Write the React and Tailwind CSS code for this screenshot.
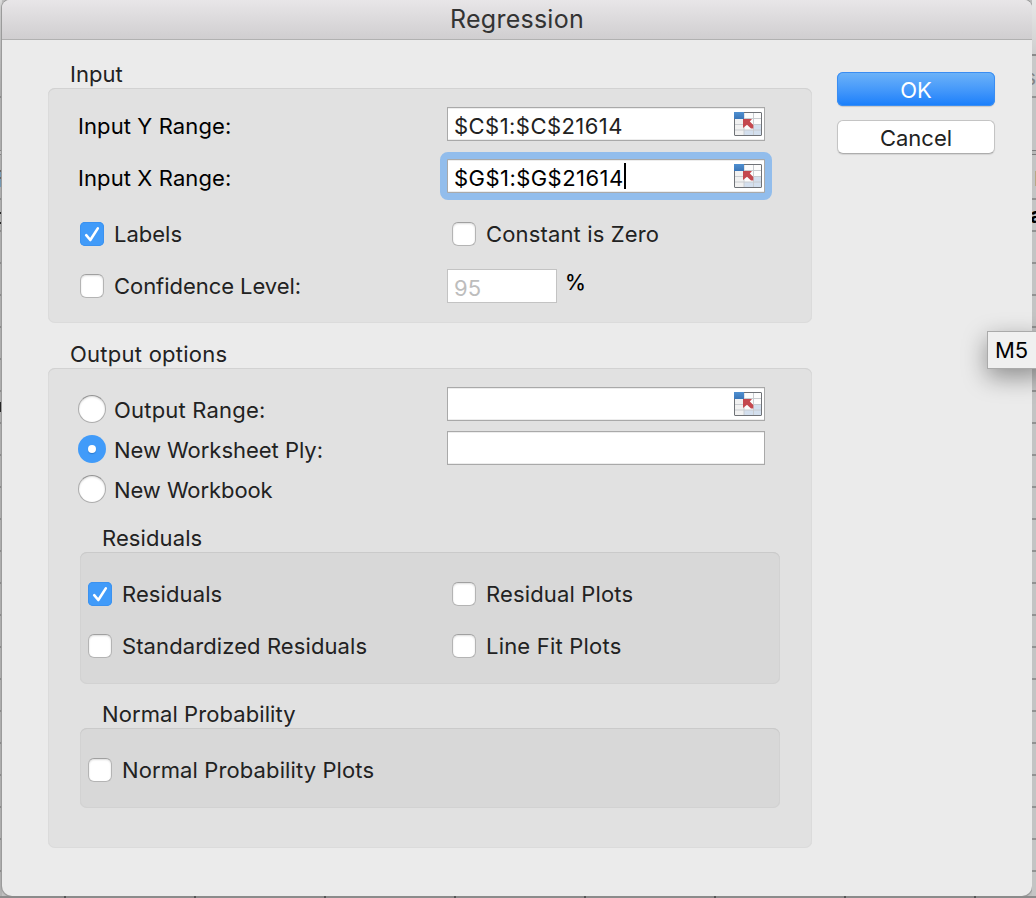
import React from "react";

function RangeIcon() {
  return (
    <svg width="28" height="26" viewBox="0 0 28 26" className="shrink-0">
      <defs>
        <linearGradient id="cell" x1="0" y1="0" x2="0" y2="1">
          <stop offset="0" stopColor="#4f8fd0" />
          <stop offset="1" stopColor="#3b76b8" />
        </linearGradient>
      </defs>
      <rect y="1" width="28" height="24" fill="#fcfcfc" />
      <rect x="1" y="8" width="9" height="16" fill="#f1f1f1" />
      <rect x="19" y="13" width="8" height="11" fill="#d3dfee" />
      <rect x="10" y="19" width="17" height="5" fill="#d3dfee" />
      <path d="M10 13.5H27M1 13.5H10M1 19H27M10 1V24M19.5 1V24M10 7.5H27" stroke="#c9ccd0" strokeWidth="1" fill="none" />
      <rect x="0.5" y="1.5" width="27" height="23" rx="0.5" fill="none" stroke="#6f7277" strokeWidth="1" />
      <rect y="1" width="10" height="7" fill="url(#cell)" />
      <path d="M9 8H18L15.8 10.4L19.3 14V17.5H17L13 13.8L9 17Z" fill="#c4484e" />
    </svg>
  );
}

function Check({ checked }) {
  if (checked) {
    return (
      <span className="block size-6 shrink-0 rounded-[5px] bg-[#419bf9] shadow-[inset_0_0_0_1px_#3b92f0]">
        <svg viewBox="0 0 24 24" className="size-6">
          <path d="M6.2 13.2L10.3 18L17.8 6.4" fill="none" stroke="#fff" strokeWidth="2.6" strokeLinecap="round" strokeLinejoin="round" />
        </svg>
      </span>
    );
  }
  return <span className="block size-6 shrink-0 rounded-[6px] border border-[#b4b4b4] border-t-[#a0a0a0] bg-white shadow-[inset_0_1px_2px_#dcdcdc]" />;
}

function Radio({ checked }) {
  return checked ? (
    <span className="mb-[2px] flex size-7 shrink-0 items-center justify-center rounded-full bg-[#419bf9]">
      <span className="size-2 rounded-full bg-white shadow-[0_1px_1px_#2a7ad0]" />
    </span>
  ) : (
    <span className="mb-[2px] size-7 shrink-0 rounded-full border border-[#acacac] border-t-[#949494] bg-white shadow-[inset_0_1px_2px_#dcdcdc]" />
  );
}

function Option({ checked, children, track = "tracking-[0.1px]", className = "" }) {
  return (
    <label className={`flex items-center gap-[10px] ${className}`}>
      <Check checked={checked} />
      <span className={track}>{children}</span>
    </label>
  );
}

function RadioOption({ checked, children, track }) {
  return (
    <label className="flex h-10 items-center gap-2">
      <Radio checked={checked} />
      <span className={track}>{children}</span>
    </label>
  );
}

function LeftSheetEdge() {
  return (
    <div className="flex h-full w-[2px] shrink-0 flex-col bg-[#b4b4b4]">
      <div className="h-24 bg-gradient-to-b from-[#dedede] to-[#b0b0b0]" />
      <div className="h-[2px] bg-[#868686]" />
      <div className="mt-[52px] h-[5px] border-y border-[#7c7c7c] bg-[#c8c8c8]" />
      <div className="mt-[15px] h-[2px] bg-[#555]" />
      <div className="h-[15px] bg-[linear-gradient(to_bottom,#6898bb_5px,#555_5px,#555_7px,#6898bb_7px)]" />
      <div className="mt-[11px] h-[2px] bg-[#868686]" />
      <div className="mt-3 h-3 border-y-2 border-black" />
      <div className="mt-[6px] h-[172px] bg-[linear-gradient(to_bottom,#868686_2px,transparent_2px)] bg-[length:2px_32px]" />
      <div className="h-[10px] w-[2px] bg-black" />
      <div className="grow bg-[linear-gradient(to_bottom,transparent_10px,#868686_10px,#868686_12px,transparent_12px)] bg-[length:2px_32px]" />
    </div>
  );
}

function RightSheetEdge() {
  return (
    <div className="flex h-full w-1 shrink-0 flex-col overflow-hidden bg-[#c4c4c4]">
      <div className="h-[54px] shrink-0 bg-gradient-to-b from-[#e8e8e8] to-[#cfcfcf]" />
      <div className="flex h-[2px] shrink-0 bg-[#8a8a8a]" />
      <div className="flex h-10 shrink-0 justify-end bg-[#c9c9c9] pt-[10px]">
        <span className="text-[21px] text-[#858585]">s</span>
      </div>
      <div className="h-[2px] shrink-0 bg-[#929292]" />
      <div className="mt-[52px] h-[5px] shrink-0 border-y border-[#7c7c7c] bg-[#b8b8b8]" />
      <div className="mt-4 ml-[3px] h-[15px] shrink-0 bg-[#b5a888]" />
      <div className="mt-3 h-[2px] shrink-0 bg-[#929292]" />
      <div className="flex h-[30px] shrink-0 pt-[3px]">
        <span className="-ml-[2px] text-[22px] font-bold text-black">a</span>
      </div>
      <div className="grow bg-[linear-gradient(to_bottom,#929292_2px,transparent_2px)] bg-[length:4px_32px]" />
    </div>
  );
}

const FIELD = "flex h-[34px] w-[318px] shrink-0 items-center border border-[#a9a9a9] bg-white pl-[6px] pr-[2px] shadow-[inset_0_-1px_0_#ededed,inset_0_1px_0_#ededed]";
const PANEL = "rounded-[7px] bg-[#e1e1e1] shadow-[inset_0_1px_0_#d2d2d2,inset_0_0_0_1px_#dbdbdb]";
const SUBPANEL = "ml-8 w-[700px] rounded-[7px] bg-[#d8d8d8] shadow-[inset_0_1px_0_#cacaca,inset_0_0_0_1px_#d2d2d2]";

export default function App() {
  return (
    <div className="relative flex h-[898px] w-[1036px] flex-col overflow-hidden bg-[#c4c4c4] font-['Inter','Liberation_Sans',sans-serif] text-[22px] leading-6 whitespace-nowrap text-[#222]">
      <div className="flex h-[896px]">
        <LeftSheetEdge />
        <main className="h-[896px] w-[1030px] shrink-0 rounded-b-[10px] rounded-t-[8px] bg-[#ebebeb] shadow-[0_0_0_1px_#9b9b9b,0_0_4px_#999]">
          <header className="flex h-10 items-start justify-center rounded-t-[8px] border-b border-[#b1b1b1] bg-gradient-to-b from-[#e8e6e8] to-[#d0ced0] pt-[7px]">
            <h1 className="text-[25px] leading-6 tracking-[0.25px] text-[#333]">Regression</h1>
          </header>
          <div className="flex gap-[25px] pl-[46px]">
            <div className="w-[764px]">
              <h2 className="h-12 pt-[22px] pl-[22px]">Input</h2>
              <section className={`${PANEL} h-[235px] pt-[19px]`}>
                <div className="flex pl-[30px] text-black">
                  <span className="w-[369px] pt-[7px] tracking-[0.1px]">Input Y Range:</span>
                  <div className={FIELD}>
                    <span className="grow pt-1 tracking-[0.45px] text-[#222]">$C$1:$C$21614</span>
                    <RangeIcon />
                  </div>
                </div>
                <div className="mt-[18px] flex pl-[30px] text-black">
                  <span className="w-[369px] pt-[7px] tracking-[0.1px]">Input X Range:</span>
                  <div className="rounded-[1px] outline-[7px] outline-[#92bdec]">
                    <div className={FIELD}>
                      <span className="pt-1 tracking-[0.45px]">$G$1:$G$21614</span>
                      <span className="mr-auto h-[26px] w-[2px] bg-black" />
                      <RangeIcon />
                    </div>
                  </div>
                </div>
                <div className="mt-6 flex h-[34px] items-center pl-8">
                  <Option checked track="tracking-normal" className="w-[372px]">Labels</Option>
                  <Option track="tracking-[0.15px]">Constant is Zero</Option>
                </div>
                <div className="mt-[18px] flex h-[34px] pl-8">
                  <Option track="tracking-[-0.05px]" className="w-[367px]">Confidence Level:</Option>
                  <div className="flex w-[110px] items-center border border-[#c3c3c3] bg-white pt-1 pl-[6px] text-[#bdbdbd]">95</div>
                  <span className="pt-[2px] pl-[8px] text-[21px] font-medium text-black">%</span>
                </div>
              </section>
              <h2 className="h-[45px] pt-[19px] pl-[22px] tracking-[0.25px]">Output options</h2>
              <section className={`${PANEL} h-[480px] pt-[19px]`}>
                <div className="flex pl-[30px]">
                  <div className="w-[369px] pt-[3px]">
                    <RadioOption track="tracking-[0.2px]">Output Range:</RadioOption>
                    <RadioOption checked track="tracking-[-0.03px]">New Worksheet Ply:</RadioOption>
                    <RadioOption track="tracking-[-0.08px]">New Workbook</RadioOption>
                  </div>
                  <div className="flex flex-col gap-[10px]">
                    <div className={`${FIELD} justify-end`}>
                      <RangeIcon />
                    </div>
                    <div className={FIELD} />
                  </div>
                </div>
                <h3 className="h-[42px] pt-4 pl-[54px] tracking-[0.1px]">Residuals</h3>
                <div className={`${SUBPANEL} h-[132px] pt-[30px] pl-2`}>
                  <div className="flex">
                    <Option checked className="w-[364px]">Residuals</Option>
                    <Option track="tracking-[0.15px]">Residual Plots</Option>
                  </div>
                  <div className="mt-7 flex">
                    <Option className="w-[364px]">Standardized Residuals</Option>
                    <Option track="tracking-[0.2px]">Line Fit Plots</Option>
                  </div>
                </div>
                <h3 className="h-11 pt-[18px] pl-[54px] tracking-[0.08px]">Normal Probability</h3>
                <div className={`${SUBPANEL} h-20 pt-[30px] pl-2`}>
                  <Option track="tracking-[0.11px]">Normal Probability Plots</Option>
                </div>
              </section>
            </div>
            <div className="flex w-[158px] flex-col gap-[14px] pt-8">
              <button className="h-[34px] rounded-[6px] bg-gradient-to-b from-[#6db3f8] to-[#157efb] pt-[2px] text-white shadow-[inset_0_0_0_1px_#3a8df2,0_1px_1px_#c8c8c8]">OK</button>
              <button className="h-[34px] rounded-[6px] border border-[#c4c4c4] border-b-[#adadad] bg-white pt-[2px] shadow-[0_1px_1px_#d4d4d4]">Cancel</button>
            </div>
          </div>
        </main>
        <RightSheetEdge />
      </div>
      <div className="h-[2px] bg-[#8b8b8b] bg-[linear-gradient(to_right,transparent_128px,#555_128px,#555_130px)] bg-[length:130px_2px] bg-[position:66px_0]" />
      <div className="absolute top-[331px] left-[987px] h-[38px] w-[60px] border border-[#aaa] bg-[#f0f0f0] pt-[6px] pl-[7px] text-black shadow-[0_8px_24px_#0006]">M5</div>
    </div>
  );
}
